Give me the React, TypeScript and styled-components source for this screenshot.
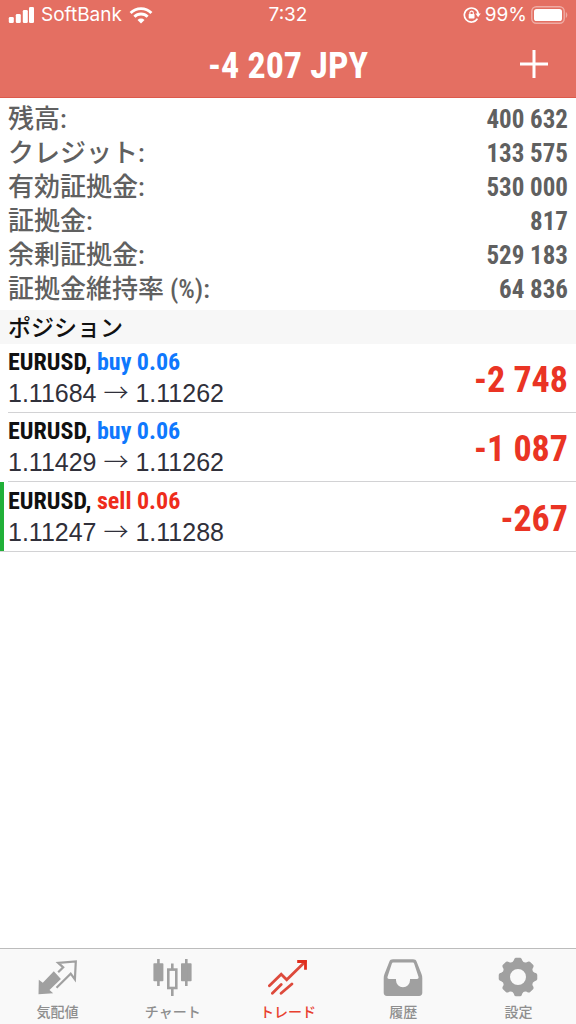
import React from "react";
import styled, { createGlobalStyle } from "styled-components";

const condensed = `"Roboto Condensed", "Noto Sans CJK JP", sans-serif`;

const GlobalStyle = createGlobalStyle`
  *, *::before, *::after { box-sizing: border-box; }
  body {
    margin: 0;
    background: #fff;
    font-family: "Liberation Sans", "Noto Sans CJK JP", sans-serif;
  }
`;

const Screen = styled.div`
  display: flex;
  flex-direction: column;
  min-height: 100vh;
`;

const Header = styled.header`
  background: #e46f62;
  border-bottom: 1px solid #dc5a4c;
  color: #fff;
`;

const StatusBar = styled.div`
  display: grid;
  grid-template-columns: 1fr auto 1fr;
  align-items: center;
  height: 30px;
  padding: 0 8px;
  font: 400 19px/30px Inter, sans-serif;
`;

const StatusGroup = styled.div<{ $end?: boolean }>`
  display: flex;
  align-items: center;
  justify-content: ${(p) => (p.$end ? "flex-end" : "flex-start")};
  gap: ${(p) => (p.$end ? "4px" : "7px")};
`;

const TitleBar = styled.div`
  display: grid;
  grid-template-columns: 1fr auto 1fr;
  align-items: center;
  height: 67px;
  padding: 0 28px;
`;

const Title = styled.h1`
  grid-column: 2;
  margin: 0;
  padding-top: 4px;
  font: 700 36px/60px ${condensed};
`;

const AddButton = styled.button`
  justify-self: end;
  display: flex;
  padding: 0;
  border: 0;
  background: none;
  color: inherit;
  cursor: pointer;
`;

const Summary = styled.dl`
  margin: 0;
  padding: 4px 8px;
`;

const SummaryRow = styled.div`
  display: flex;
  align-items: baseline;
  justify-content: space-between;
  height: 34px;
  color: #606060;
`;

const SummaryLabel = styled.dt`
  font: 500 26px/34px ${condensed};
`;

const SummaryValue = styled.dd`
  margin: 0;
  font: 700 25px/32px ${condensed};
`;

const SectionTitle = styled.h2`
  margin: 0;
  padding: 0 8px 2px;
  background: #f7f7f7;
  color: #111;
  font: 500 23px/32px "Noto Sans CJK JP", sans-serif;
`;

const PositionList = styled.ul`
  margin: 0;
  padding: 0;
  list-style: none;
  border-bottom: 1px solid #d2d2d4;
`;

const PositionItem = styled.li<{ $marked?: boolean }>`
  border-left: 4px solid ${(p) => (p.$marked ? "#21b038" : "transparent")};
  padding-left: 4px;
`;

const PositionBody = styled.div`
  display: flex;
  align-items: center;
  justify-content: space-between;
  height: 69px;
  padding-right: 8px;
  border-bottom: 1px solid #d2d2d4;

  ${PositionItem}:last-child & {
    border-bottom: 0;
  }
`;

const PositionInfo = styled.div`
  padding-bottom: 2px;
`;

const Symbol = styled.div`
  color: #111;
  font: 700 24px/32px ${condensed};
`;

const Side = styled.span<{ $sell: boolean }>`
  color: ${(p) => (p.$sell ? "#ee2c1c" : "#0f78fd")};
`;

const Prices = styled.div`
  color: #30303a;
  font: 300 25px/30px "Liberation Sans", sans-serif;
`;

const Arrow = styled.span`
  font-family: "Noto Sans CJK JP", sans-serif;
  line-height: 1;
`;

const Profit = styled.div`
  padding-top: 4px;
  color: #ea3424;
  font: 700 36px/60px ${condensed};
`;

const TabBar = styled.nav`
  display: flex;
  height: 76px;
  margin-top: auto;
  border-top: 1px solid #bcbcbc;
  background: #f9f9f9;
`;

const Tab = styled.a<{ $active?: boolean }>`
  flex: 1;
  display: flex;
  flex-direction: column;
  align-items: center;
  gap: 5px;
  padding-top: 8px;
  color: ${(p) => (p.$active ? "#e8402f" : "#8e8e8e")};
  font: 500 14px/18px "Noto Sans CJK JP", sans-serif;
  text-decoration: none;

  svg {
    color: ${(p) => (p.$active ? "#dd4a3c" : "#a0a0a0")};
  }
`;

const SignalIcon = () => (
  <svg width="26" height="18" viewBox="0 0 26 18" fill="currentColor" aria-hidden="true">
    <rect x="0.8" y="11" width="5" height="6" rx="1.3" />
    <rect x="7.8" y="8" width="5" height="9" rx="1.3" />
    <rect x="14.8" y="4" width="5" height="13" rx="1.3" />
    <rect x="21" y="1" width="5" height="16" rx="1.3" />
  </svg>
);

const WifiIcon = () => (
  <svg width="24" height="18" viewBox="0 0 24 18" aria-hidden="true">
    <g fill="none" stroke="currentColor" strokeWidth="2.9">
      <path d="M1.6 6.9a14.7 14.7 0 0 1 20.8 0" />
      <path d="M5.4 10.7a9.3 9.3 0 0 1 13.2 0" />
    </g>
    <path d="M12 17.6l-3.5-3.7a5 5 0 0 1 7 0z" fill="currentColor" />
  </svg>
);

const RotationLockIcon = () => (
  <svg width="18" height="18" viewBox="0 0 18 18" aria-hidden="true">
    <path d="M14.4 12.6A7 7 0 1 1 15.3 8" fill="none" stroke="currentColor" strokeWidth="1.7" />
    <path d="M12.4 7.6h5.4l-2.7 3.6z" fill="currentColor" />
    <rect x="5.7" y="8" width="5.8" height="4.4" rx="0.6" fill="currentColor" />
    <path d="M6.9 8V6.8a1.7 1.7 0 0 1 3.4 0V8" fill="none" stroke="currentColor" strokeWidth="1.1" />
  </svg>
);

const BatteryIcon = () => (
  <svg width="37" height="18" viewBox="0 0 37 18" aria-hidden="true">
    <rect x="0.8" y="0.8" width="32.4" height="16.4" rx="4.5" fill="none" stroke="currentColor" strokeWidth="1.4" opacity="0.42" />
    <rect x="3" y="3" width="28" height="12" rx="2.6" fill="currentColor" />
    <path d="M34.8 6v6c2-.8 2-5.2 0-6z" fill="currentColor" opacity="0.42" />
  </svg>
);

const PlusIcon = () => (
  <svg width="28" height="28" viewBox="0 0 28 28" aria-hidden="true">
    <path d="M14 0v28M0 14h28" stroke="currentColor" strokeWidth="3" />
  </svg>
);

const QuotesIcon = () => (
  <svg width="40" height="40" viewBox="0 0 40 40" aria-hidden="true">
    <path d="M.8 22.7L.5 37.3l14.7-1L11.5 33l11.4-11-7.1-7.7-11 11.4z" fill="currentColor" />
    <path d="M20.2 15.3l5-5-5-4.4 17.6-1.5-.9 17.9-4.2-5.6L18.5 30.7" fill="none" stroke="currentColor" strokeWidth="2.2" />
  </svg>
);

const ChartIcon = () => (
  <svg width="40" height="40" viewBox="0 0 40 40" aria-hidden="true">
    <g fill="currentColor">
      <rect x="0.4" y="6.3" width="10" height="18" rx="0.8" />
      <rect x="4.1" y="2" width="2.6" height="27" />
      <rect x="28" y="6.3" width="10.6" height="18" rx="0.8" />
      <rect x="32" y="2" width="2.6" height="27" />
      <rect x="18" y="6.5" width="2.6" height="6" />
      <rect x="18" y="31.5" width="2.6" height="7.5" />
    </g>
    <rect x="15.3" y="12.6" width="8" height="18.4" fill="none" stroke="currentColor" strokeWidth="2.6" />
  </svg>
);

const TradeIcon = () => (
  <svg width="40" height="40" viewBox="0 0 40 40" fill="none" stroke="currentColor" strokeWidth="2.8" aria-hidden="true">
    <path d="M1.4 28.7l11.8-11.4 5.5 5.4L37.4 4.4M4.4 36.3l8.8-8.7M13.1 36.3l10.8-9.3" strokeLinecap="round" />
    <path d="M29.2 4.5h8.3v8.3" stroke="#e02d1c" />
  </svg>
);

const HistoryIcon = () => (
  <svg width="40" height="40" viewBox="0 0 40 40" fill="currentColor" aria-hidden="true">
    <path
      fillRule="evenodd"
      d="M10 2.3h20c2 0 3 .8 3.7 2.4l4.9 12.6c.5 1.4.7 2.6.7 4v14.5c0 2-1.2 3.2-3.2 3.2H3.9c-2 0-3.2-1.2-3.2-3.2V21.3c0-1.4.2-2.6.7-4L6.3 4.7C7 3.1 8 2.3 10 2.3zM10.5 5.5c-.9 0-1.4.3-1.7 1.2L4.6 19.6c-.5 1.6 0 2.5 1.5 2.5H13v1.2a7 7 0 0 0 14 0v-1.2h6.9c1.5 0 2-.9 1.5-2.5L31.2 6.7c-.3-.9-.8-1.2-1.7-1.2z"
    />
  </svg>
);

const polar = (radius: number, degrees: number) => {
  const a = (degrees * Math.PI) / 180;
  return `${(20 + radius * Math.cos(a)).toFixed(2)} ${(20 + radius * Math.sin(a)).toFixed(2)}`;
};

// Eight rounded teeth, each joined to the next by a concave valley.
const gearOutline =
  Array.from({ length: 8 }, (_, i) => {
    const a = i * 45;
    return [
      `${i ? "L" : "M"}${polar(17.2, a - 14)}`,
      `Q${polar(19.2, a - 12)} ${polar(19.4, a - 7)}`,
      `L${polar(19.4, a + 7)}`,
      `Q${polar(19.2, a + 12)} ${polar(17.2, a + 14)}`,
      `Q${polar(14.6, a + 22.5)} ${polar(17.2, a + 31)}`,
    ].join("");
  }).join("") + "Z";

const SettingsIcon = () => (
  <svg width="40" height="40" viewBox="0 0 40 40" aria-hidden="true">
    <path fillRule="evenodd" fill="currentColor" d={`${gearOutline}M28 20a8 8 0 1 0-16 0 8 8 0 0 0 16 0z`} />
  </svg>
);

const summary = [
  ["残高:", "400 632"],
  ["クレジット:", "133 575"],
  ["有効証拠金:", "530 000"],
  ["証拠金:", "817"],
  ["余剰証拠金:", "529 183"],
  ["証拠金維持率 (%):", "64 836"],
];

const positions = [
  { side: "buy", open: "1.11684", now: "1.11262", profit: "-2 748" },
  { side: "buy", open: "1.11429", now: "1.11262", profit: "-1 087" },
  { side: "sell", open: "1.11247", now: "1.11288", profit: "-267", marked: true },
];

const tabs = [
  { label: "気配値", Icon: QuotesIcon },
  { label: "チャート", Icon: ChartIcon },
  { label: "トレード", Icon: TradeIcon, active: true },
  { label: "履歴", Icon: HistoryIcon },
  { label: "設定", Icon: SettingsIcon },
];

export default function App() {
  return (
    <Screen>
      <GlobalStyle />
      <Header>
        <StatusBar>
          <StatusGroup>
            <SignalIcon />
            <span>SoftBank</span>
            <WifiIcon />
          </StatusGroup>
          <span>7:32</span>
          <StatusGroup $end>
            <RotationLockIcon />
            <span>99%</span>
            <BatteryIcon />
          </StatusGroup>
        </StatusBar>
        <TitleBar>
          <Title>-4 207 JPY</Title>
          <AddButton type="button" aria-label="新規注文">
            <PlusIcon />
          </AddButton>
        </TitleBar>
      </Header>
      <main>
        <Summary>
          {summary.map(([label, value]) => (
            <SummaryRow key={label}>
              <SummaryLabel>{label}</SummaryLabel>
              <SummaryValue>{value}</SummaryValue>
            </SummaryRow>
          ))}
        </Summary>
        <SectionTitle>ポジション</SectionTitle>
        <PositionList>
          {positions.map((p) => (
            <PositionItem key={p.open} $marked={p.marked}>
              <PositionBody>
                <PositionInfo>
                  <Symbol>
                    EURUSD, <Side $sell={p.side === "sell"}>{p.side} 0.06</Side>
                  </Symbol>
                  <Prices>
                    {p.open} <Arrow>→</Arrow> {p.now}
                  </Prices>
                </PositionInfo>
                <Profit>{p.profit}</Profit>
              </PositionBody>
            </PositionItem>
          ))}
        </PositionList>
      </main>
      <TabBar>
        {tabs.map(({ label, Icon, active }) => (
          <Tab key={label} href="#" $active={active} aria-current={active ? "page" : undefined}>
            <Icon />
            {label}
          </Tab>
        ))}
      </TabBar>
    </Screen>
  );
}
